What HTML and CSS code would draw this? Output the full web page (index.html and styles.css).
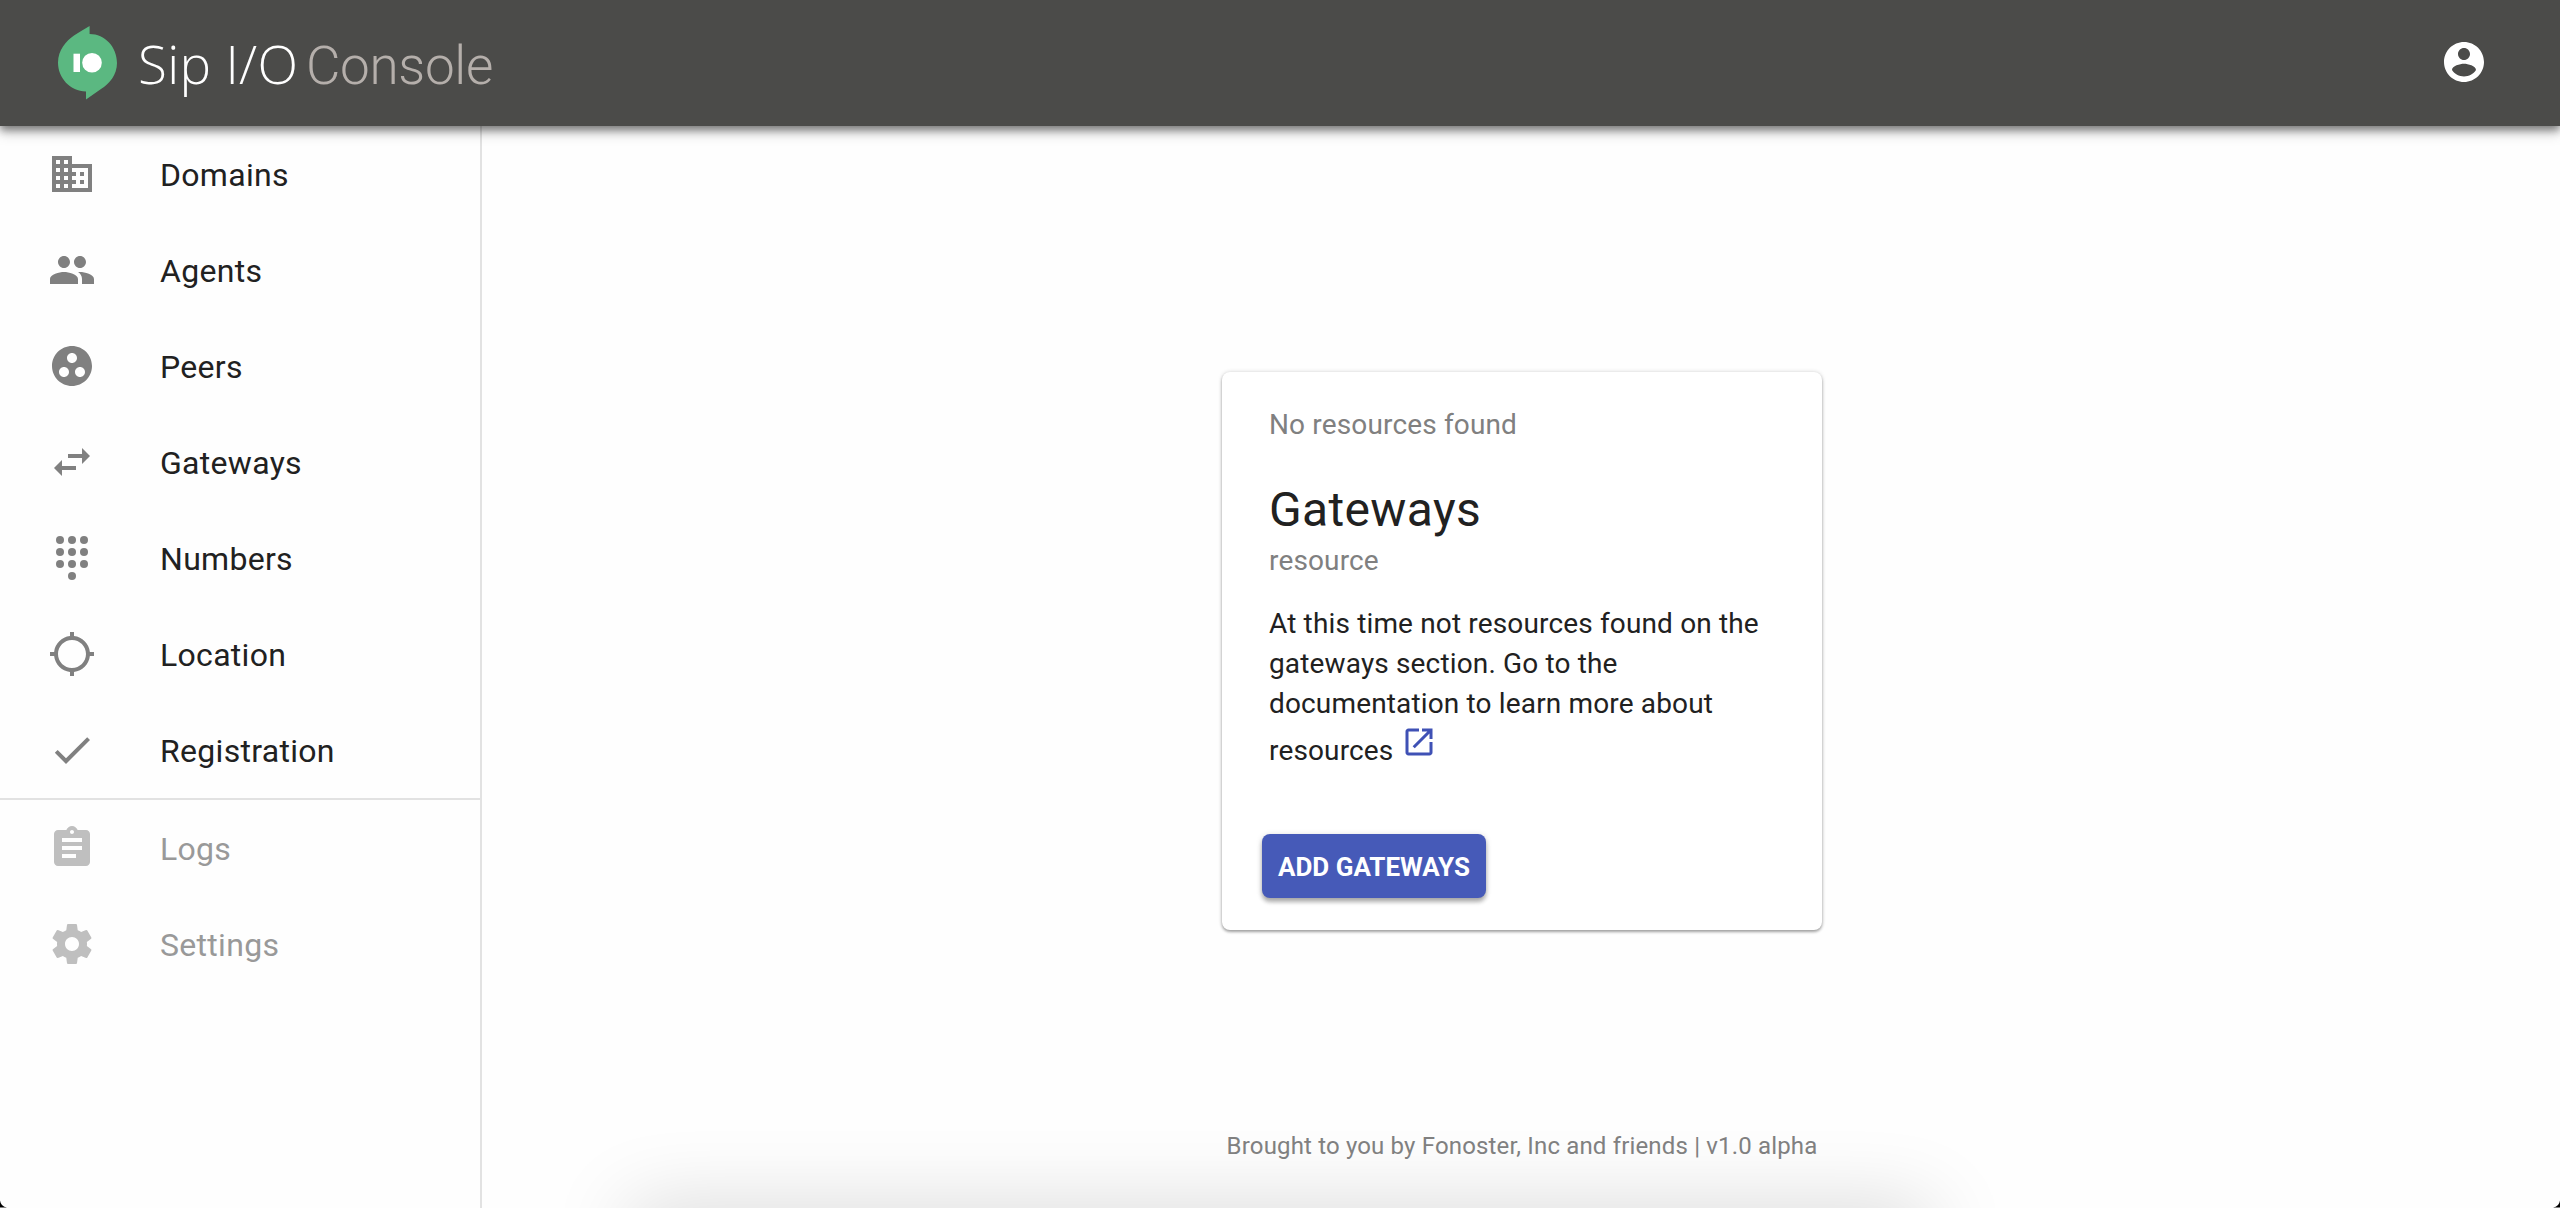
FILE: index.html
```html
<!DOCTYPE html>
<html lang="en">
<head>
<meta charset="utf-8">
<title>Sip I/O Console</title>
<link rel="stylesheet" href="styles.css">
</head>
<body>
<header class="app-bar">
  <div class="brand">
    <svg class="brand-logo" viewBox="0 0 59 74" aria-hidden="true">
      <path fill="#5bb881" d="M31.600 0V8C47 8 59 21 59 37C59 49 51 58 43 63L28 73.500V65.500C12 65 0 52 0 36.500C0 24 8 15 16 9.500Q23 5 31.600 0Z"/>
      <rect x="15.500" y="27.700" width="6.500" height="18.300" fill="#fff"/>
      <circle cx="34" cy="36.700" r="9.800" fill="#fff"/>
    </svg>
    <span class="brand-name">Sip I/O</span>
    <span class="brand-product">Console</span>
  </div>
  <svg class="icon account" viewBox="0 0 24 24" aria-label="Account"><path d="M12 2C6.480 2 2 6.480 2 12s4.480 10 10 10 10-4.480 10-10S17.520 2 12 2zm0 3c1.660 0 3 1.340 3 3s-1.340 3-3 3-3-1.340-3-3 1.340-3 3-3zm0 14.200c-2.500 0-4.710-1.280-6-3.220.030-1.990 4-3.080 6-3.080 1.990 0 5.970 1.090 6 3.080-1.290 1.940-3.500 3.220-6 3.220z"/></svg>
</header>
<div class="layout">
  <nav class="drawer">
    <a class="nav-item"><svg class="icon" viewBox="0 0 24 24"><path d="M12 7V3H2v18h20V7H12zM6 19H4v-2h2v2zm0-4H4v-2h2v2zm0-4H4V9h2v2zm0-4H4V5h2v2zm4 12H8v-2h2v2zm0-4H8v-2h2v2zm0-4H8V9h2v2zm0-4H8V5h2v2zm10 12h-8v-2h2v-2h-2v-2h2v-2h-2V9h8v10zm-2-8h-2v2h2v-2zm0 4h-2v2h2v-2z"/></svg><span>Domains</span></a>
    <a class="nav-item"><svg class="icon" viewBox="0 0 24 24"><path d="M16 11c1.660 0 2.990-1.340 2.990-3S17.660 5 16 5c-1.660 0-3 1.340-3 3s1.340 3 3 3zm-8 0c1.660 0 2.990-1.340 2.990-3S9.660 5 8 5C6.340 5 5 6.340 5 8s1.340 3 3 3zm0 2c-2.330 0-7 1.170-7 3.500V19h14v-2.500c0-2.330-4.670-3.500-7-3.500zm8 0c-.290 0-.620.020-.970.050 1.160.840 1.970 1.970 1.970 3.450V19h6v-2.500c0-2.330-4.670-3.500-7-3.500z"/></svg><span>Agents</span></a>
    <a class="nav-item"><svg class="icon" viewBox="0 0 24 24"><path d="M12 2C6.480 2 2 6.480 2 12s4.480 10 10 10 10-4.480 10-10S17.520 2 12 2zM8 17.500c-1.380 0-2.500-1.120-2.500-2.500s1.120-2.500 2.500-2.500 2.500 1.120 2.500 2.500-1.120 2.500-2.500 2.500zM9.500 8c0-1.380 1.120-2.500 2.500-2.500s2.500 1.120 2.500 2.500-1.120 2.500-2.500 2.500S9.500 9.380 9.500 8zm6.500 9.500c-1.380 0-2.500-1.120-2.500-2.500s1.120-2.500 2.500-2.500 2.500 1.120 2.500 2.500-1.120 2.500-2.500 2.500z"/></svg><span>Peers</span></a>
    <a class="nav-item"><svg class="icon" viewBox="0 0 24 24"><path d="M6.990 11L3 15l3.990 4v-3H14v-2H6.990v-3zM21 9l-3.990-4v3H10v2h7.010v3L21 9z"/></svg><span>Gateways</span></a>
    <a class="nav-item"><svg class="icon" viewBox="0 0 24 24"><circle cx="6" cy="3" r="2"/><circle cx="12" cy="3" r="2"/><circle cx="18" cy="3" r="2"/><circle cx="6" cy="9" r="2"/><circle cx="12" cy="9" r="2"/><circle cx="18" cy="9" r="2"/><circle cx="6" cy="15" r="2"/><circle cx="12" cy="15" r="2"/><circle cx="18" cy="15" r="2"/><circle cx="12" cy="21" r="2"/></svg><span>Numbers</span></a>
    <a class="nav-item"><svg class="icon" viewBox="0 0 24 24"><path d="M20.940 11c-.460-4.170-3.770-7.480-7.940-7.940V1h-2v2.060C6.830 3.520 3.520 6.830 3.060 11H1v2h2.060c.460 4.170 3.770 7.480 7.940 7.940V23h2v-2.060c4.170-.460 7.480-3.770 7.940-7.940H23v-2h-2.060zM12 19c-3.870 0-7-3.130-7-7s3.130-7 7-7 7 3.130 7 7-3.130 7-7 7z"/></svg><span>Location</span></a>
    <a class="nav-item"><svg class="icon" viewBox="0 0 24 24"><path d="M9 16.170L4.830 12l-1.420 1.410L9 19 21 7l-1.410-1.410z"/></svg><span>Registration</span></a>
    <hr class="divider">
    <a class="nav-item disabled"><svg class="icon" viewBox="0 0 24 24"><path d="M19 3h-4.180C14.400 1.840 13.300 1 12 1c-1.300 0-2.400.840-2.820 2H5c-1.100 0-2 .900-2 2v14c0 1.100.900 2 2 2h14c1.100 0 2-.900 2-2V5c0-1.100-.900-2-2-2zm-7 0c.550 0 1 .450 1 1s-.450 1-1 1-1-.450-1-1 .450-1 1-1zm2 14H7v-2h7v2zm3-4H7v-2h10v2zm0-4H7V7h10v2z"/></svg><span>Logs</span></a>
    <a class="nav-item disabled"><svg class="icon" viewBox="0 0 24 24"><path d="M19.430 12.980c.040-.320.070-.640.070-.980s-.030-.660-.070-.980l2.110-1.650c.190-.150.240-.420.120-.640l-2-3.460c-.120-.220-.390-.300-.610-.220l-2.490 1c-.520-.400-1.080-.730-1.690-.980l-.380-2.650C14.460 2.180 14.250 2 14 2h-4c-.250 0-.460.180-.490.420l-.380 2.650c-.610.250-1.170.590-1.690.980l-2.490-1c-.230-.090-.490 0-.610.220l-2 3.460c-.130.220-.070.490.120.640l2.110 1.650c-.040.320-.070.650-.070.980s.030.660.070.980l-2.110 1.650c-.190.150-.240.420-.120.640l2 3.460c.120.220.390.300.610.220l2.490-1c.520.400 1.080.730 1.690.980l.380 2.650c.030.240.240.420.490.420h4c.250 0 .460-.180.490-.420l.380-2.650c.610-.250 1.170-.590 1.690-.980l2.490 1c.230.090.490 0 .610-.220l2-3.460c.120-.220.070-.490-.120-.640l-2.110-1.650zM12 15.500c-1.930 0-3.500-1.570-3.500-3.500s1.570-3.500 3.500-3.500 3.500 1.570 3.500 3.500-1.570 3.500-3.500 3.500z"/></svg><span>Settings</span></a>
  </nav>
  <main class="content">
    <section class="card">
      <p class="card-note">No resources found</p>
      <h1 class="card-title">Gateways</h1>
      <p class="card-note">resource</p>
      <p class="card-text">At this time not resources found on the gateways section. Go to the documentation to learn more about resources <a class="doc-link"><svg class="icon" viewBox="0 0 24 24"><path d="M19 19H5V5h7V3H5c-1.110 0-2 .900-2 2v14c0 1.100.890 2 2 2h14c1.100 0 2-.900 2-2v-7h-2v7zM14 3v2h3.590l-9.830 9.830 1.410 1.410L19 6.410V10h2V3h-7z"/></svg></a></p>
      <button class="add-button">ADD GATEWAYS</button>
    </section>
    <footer class="footer">Brought to you by Fonoster, Inc and friends | v1.0 alpha</footer>
    <div class="bottom-shade"></div>
  </main>
</div>
<svg class="window-corner left" viewBox="0 0 8 8"><path d="M0 0Q1 7 8 8H0Z"/></svg>
<svg class="window-corner right" viewBox="0 0 8 8"><path d="M8 0Q7 7 0 8H8Z"/></svg>
</body>
</html>
```
FILE: styles.css
```css
* { box-sizing: border-box; }

body {
  position: relative;
  margin: 0;
  height: 1208px;
  display: flex;
  flex-direction: column;
  overflow: hidden;
  background: #fefefe;
  color: #212121;
  font-family: Roboto, "Liberation Sans", sans-serif;
}

p, h1 { margin: 0; }

.icon {
  width: 48px;
  height: 48px;
  flex: none;
  fill: currentColor;
}

.app-bar {
  height: 126px;
  flex: none;
  display: flex;
  align-items: center;
  justify-content: space-between;
  padding: 0 72px 2px 58px;
  background: #4b4b49;
  color: #fff;
  box-shadow: 0 4px 8px rgba(0, 0, 0, .45), 0 8px 12px rgba(0, 0, 0, .15);
  z-index: 2;
}

.brand { display: flex; align-items: center; height: 124px; }
.brand-logo { width: 59px; height: 74px; margin: 2px 21px 0 0; }

.brand-name {
  width: 168px;
  margin-top: 4px;
  font: 300 53px/60px "Open Sans", sans-serif;
  letter-spacing: .3px;
  white-space: nowrap;
}

.brand-product {
  margin-top: 8px;
  font-size: 53px;
  font-weight: 300;
  line-height: 60px;
  letter-spacing: -.3px;
  color: #b5afab;
}

.layout { flex: 1; display: flex; min-height: 0; }

.drawer {
  width: 482px;
  flex: none;
  border-right: 2px solid #e2e2e2;
}

.nav-item {
  height: 96px;
  display: flex;
  align-items: center;
  gap: 64px;
  padding-left: 48px;
  font-size: 32px;
  letter-spacing: .3px;
}

.nav-item span { padding-top: 1px; }
.nav-item .icon { color: #808080; }
.divider { height: 2px; margin: 0; border: 0; background: #e2e2e2; }
.nav-item.disabled { color: #999; }
.nav-item.disabled .icon { color: #bfbfbf; }

.content {
  position: relative;
  flex: 1;
  display: flex;
  flex-direction: column;
  align-items: center;
  padding: 246px 0 0 2px;
}

.card {
  width: 600px;
  height: 558px;
  padding: 33px 47px;
  border-radius: 8px;
  background: #fff;
  letter-spacing: .15px;
  box-shadow: 0 2px 3px rgba(0, 0, 0, .32), 0 0 4px rgba(0, 0, 0, .16);
}

.card-note { font-size: 28px; line-height: 40px; color: #808080; }
.card-title { margin: 33px 0 -1px; font-size: 48px; font-weight: 400; line-height: 64px; letter-spacing: .35px; }
.card-text { margin-top: 23px; font-size: 28px; line-height: 40px; }
.doc-link { color: #3f51b5; }
.doc-link .icon { width: 36px; height: 36px; }

.add-button {
  width: 224px;
  height: 64px;
  margin: 63px 0 0 -7px;
  padding: 2px 0 0;
  border: 0;
  border-radius: 8px;
  background: #465ab8;
  color: #fff;
  font: 700 26px/62px Roboto, sans-serif;
  white-space: nowrap;
  box-shadow: 0 4px 4px rgba(0, 0, 0, .28), 0 1px 6px rgba(0, 0, 0, .15);
}

.footer {
  margin-top: 200px;
  font-size: 24px;
  line-height: 32px;
  letter-spacing: .16px;
  color: #808080;
  z-index: 1;
}

/* soft shade along the lower edge of the page */
.bottom-shade {
  position: absolute;
  left: 148px;
  top: 1082px;
  width: 1300px;
  height: 60px;
  box-shadow: 0 0 80px rgba(0, 0, 0, .17);
}

/* rounded window corners */
.window-corner { position: absolute; bottom: 0; width: 7px; height: 8px; }
.window-corner.left { left: 0; }
.window-corner.right { right: 0; }
```
